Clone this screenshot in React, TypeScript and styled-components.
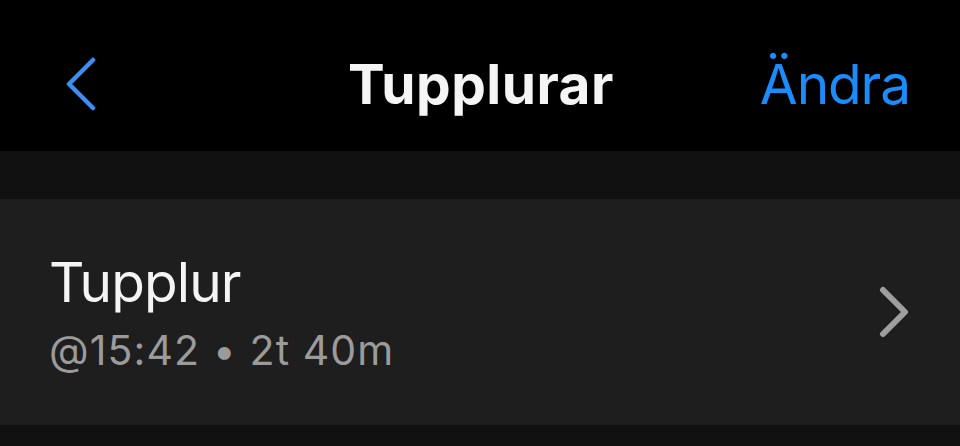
import styled, { createGlobalStyle } from "styled-components";

const GlobalStyle = createGlobalStyle`
  html, body {
    margin: 0;
    padding: 0;
    background: #111111;
  }
  body {
    font-family: Inter, "Noto Sans", "Liberation Sans", sans-serif;
    -webkit-font-smoothing: antialiased;
  }
`;

const Screen = styled.div`
  display: flex;
  flex-direction: column;
  width: 960px;
  height: 446px;
  background: #111111;
  overflow: hidden;
`;

const NavBar = styled.header`
  display: grid;
  grid-template-columns: 1fr auto 1fr;
  align-items: center;
  height: 151px;
  box-sizing: border-box;
  padding: 16px 50px 0 66px;
  background: #000000;
`;

const BackButton = styled.button`
  justify-self: start;
  display: flex;
  align-items: center;
  padding: 0;
  border: none;
  background: none;
  color: #3d8ef2;
`;

const Title = styled.h1`
  margin: 0 14px 0 0;
  font-size: 55px;
  line-height: 66px;
  font-weight: 700;
  color: #f5f5f5;
  letter-spacing: 0.5px;
`;

const EditButton = styled.button`
  justify-self: end;
  padding: 0;
  border: none;
  background: none;
  font-family: inherit;
  font-size: 55px;
  line-height: 66px;
  font-weight: 400;
  color: #1a8cfb;
  letter-spacing: -1.1px;
`;

const Spacer = styled.div`
  height: 48px;
`;

const ListRow = styled.div`
  display: flex;
  align-items: center;
  justify-content: space-between;
  height: 226px;
  padding: 0 50px 0 49px;
  box-sizing: border-box;
  background: #1e1e1e;
`;

const RowText = styled.div`
  display: flex;
  flex-direction: column;
  gap: 10px;
`;

const RowTitle = styled.span`
  font-size: 55px;
  line-height: 66px;
  color: #f4f4f4;
  letter-spacing: -0.9px;
`;

const RowSubtitle = styled.span`
  font-size: 41px;
  line-height: 50px;
  color: #9b9b9b;
  letter-spacing: 1.1px;
`;

const Disclosure = styled.svg`
  display: block;
  color: #9e9e9e;
`;

export default function App() {
  return (
    <>
      <GlobalStyle />
      <Screen>
        <NavBar>
          <BackButton aria-label="Tillbaka">
            <svg width="30" height="54" viewBox="0 0 30 54" fill="none">
              <polyline
                points="27,3 3,27 27,51"
                stroke="currentColor"
                strokeWidth="4.5"
                strokeLinecap="round"
                strokeLinejoin="round"
              />
            </svg>
          </BackButton>
          <Title>Tupplurar</Title>
          <EditButton>Ändra</EditButton>
        </NavBar>
        <Spacer />
        <ListRow>
          <RowText>
            <RowTitle>Tupplur</RowTitle>
            <RowSubtitle>@15:42 • 2t 40m</RowSubtitle>
          </RowText>
          <Disclosure width="32" height="52" viewBox="0 0 32 52" fill="none">
            <polyline
              points="5,4 27,26 5,48"
              stroke="currentColor"
              strokeWidth="6"
              strokeLinecap="round"
              strokeLinejoin="round"
            />
          </Disclosure>
        </ListRow>
      </Screen>
    </>
  );
}
